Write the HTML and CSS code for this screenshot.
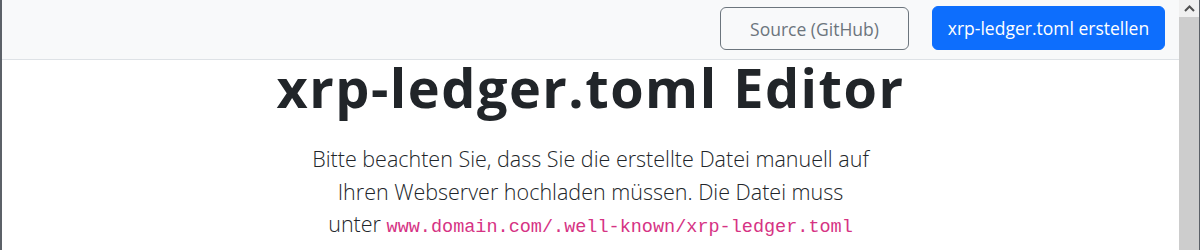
FILE: index.html
```html
<!DOCTYPE html>
<html lang="de">
<head>
<meta charset="utf-8">
<title>xrp-ledger.toml Editor</title>
<link rel="stylesheet" href="styles.css">
</head>
<body>
<div class="window">
  <div class="frame-left"></div>
  <div class="page">
    <header class="topbar">
      <a class="btn btn-outline" href="#">Source (GitHub)</a>
      <a class="btn btn-primary" href="#">xrp-ledger.toml erstellen</a>
    </header>
    <main class="hero">
      <h1 class="title">xrp-ledger.toml Editor</h1>
      <p class="lead">Bitte beachten Sie, dass Sie die erstellte Datei manuell auf Ihren Webserver hochladen müssen. Die Datei muss <span class="nowrap">unter <code class="path">www.domain.com/.well-known/xrp-ledger.toml</code></span></p>
    </main>
  </div>
  <div class="scrollbar">
    <div class="scroll-up">
      <svg width="11" height="7" viewBox="0 0 11 7"><path d="M1 6 L5.5 1.5 L10 6" fill="none" stroke="#505050" stroke-width="2"/></svg>
    </div>
    <div class="scroll-thumb"></div>
  </div>
</div>
</body>
</html>
```

FILE: styles.css
```css
html, body {
  margin: 0;
  padding: 0;
  height: 100%;
  overflow: hidden;
  background: #fff;
}

.window {
  display: flex;
  height: 250px;
  width: 1200px;
}

.frame-left {
  width: 2px;
  background: #5c6168;
  flex: none;
}

.page {
  flex: 1;
  min-width: 0;
  font-family: "Open Sans", "Noto Sans", sans-serif;
  color: #212529;
}

.topbar {
  height: 53px;
  background: #f8f9fa;
  border-bottom: 1px solid #dee2e6;
  display: flex;
  justify-content: flex-end;
  align-items: flex-start;
  gap: 23px;
  padding: 6px 14px 0 0;
}

.btn {
  display: flex;
  align-items: center;
  justify-content: center;
  height: 44px;
  box-sizing: border-box;
  border-radius: 6px;
  font-size: 17.5px;
  text-decoration: none;
  padding: 0 10px;
}

.btn-outline {
  width: 189px;
  border: 1px solid #6c757d;
  color: #6c757d;
  margin-top: 1px;
  height: 43px;
}

.btn-primary {
  width: 233px;
  background: #0d6efd;
  border: 1px solid #0d6efd;
  color: #fff;
}

.hero {
  text-align: center;
  padding-top: 0;
}

.title {
  margin: 0;
  font-size: 54px;
  font-weight: 700;
  line-height: 54px;
  letter-spacing: 1.5px;
}

.lead {
  margin: 29px auto 0;
  max-width: 575px;
  font-size: 21.5px;
  font-weight: 300;
  line-height: 32.5px;
}

.nowrap {
  white-space: nowrap;
}

.path {
  font-family: "Liberation Mono", "DejaVu Sans Mono", monospace;
  font-size: 18.5px;
  line-height: 1;
  color: #d63384;
}

.scrollbar {
  width: 20px;
  flex: none;
  display: flex;
  flex-direction: column;
  background: #f0f0f0;
  border-right: 1px solid #5c6168;
}

.scroll-up {
  height: 17px;
  display: flex;
  align-items: center;
  justify-content: center;
}

.scroll-thumb {
  flex: 1;
  background: #cdcdcd;
}
```
